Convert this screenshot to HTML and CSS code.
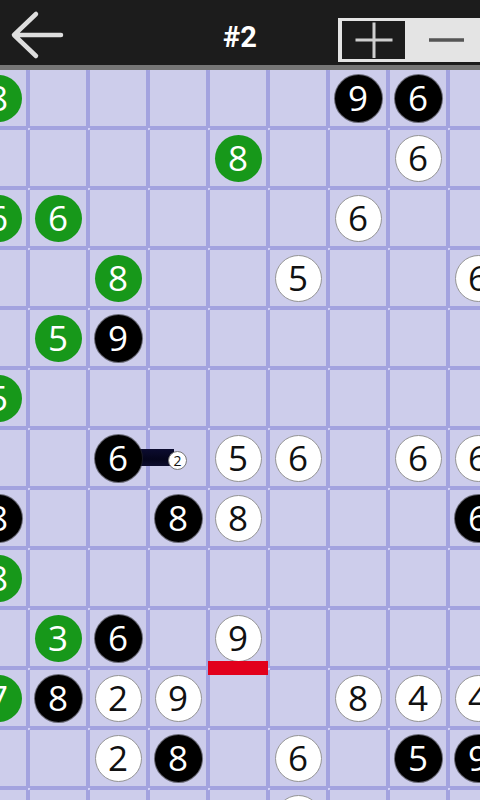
FILE: index.html
```html
<!DOCTYPE html>
<html>
<head>
<meta charset="utf-8">
<link rel="stylesheet" href="styles.css">
</head>
<body>
<div class="app">
  <header class="bar">
    <svg class="back" width="70" height="65" viewBox="0 0 70 65"><path d="M61 35 H15 M36 14 L14 35 L36 56" fill="none" stroke="#dedede" stroke-width="4.5" stroke-linecap="round" stroke-linejoin="round"/></svg>
    <div class="title">#2</div>
    <div class="zoom">
      <div class="zbtn on"><svg width="40" height="38" viewBox="0 0 40 38"><path d="M1.5 19 H38.5 M20 1.5 V37" fill="none" stroke="#cfcfcf" stroke-width="3"/></svg></div>
      <div class="zbtn off"><svg width="40" height="38" viewBox="0 0 40 38"><path d="M3 19 H38" fill="none" stroke="#555" stroke-width="3.5"/></svg></div>
    </div>
  </header>
  <main class="board">
    <div class="grid">
      <!-- row 0 -->
      <div class="cell"><span class="st g">8</span></div><div class="cell"></div><div class="cell"></div><div class="cell"></div><div class="cell"></div><div class="cell"></div><div class="cell"><span class="st b">9</span></div><div class="cell"><span class="st b">6</span></div><div class="cell"></div>
      <!-- row 1 -->
      <div class="cell"></div><div class="cell"></div><div class="cell"></div><div class="cell"></div><div class="cell"><span class="st g">8</span></div><div class="cell"></div><div class="cell"></div><div class="cell"><span class="st w">6</span></div><div class="cell"></div>
      <!-- row 2 -->
      <div class="cell"><span class="st g">6</span></div><div class="cell"><span class="st g">6</span></div><div class="cell"></div><div class="cell"></div><div class="cell"></div><div class="cell"></div><div class="cell"><span class="st w">6</span></div><div class="cell"></div><div class="cell"></div>
      <!-- row 3 -->
      <div class="cell"></div><div class="cell"></div><div class="cell"><span class="st g">8</span></div><div class="cell"></div><div class="cell"></div><div class="cell"><span class="st w">5</span></div><div class="cell"></div><div class="cell"></div><div class="cell"><span class="st w">6</span></div>
      <!-- row 4 -->
      <div class="cell"></div><div class="cell"><span class="st g">5</span></div><div class="cell"><span class="st b">9</span></div><div class="cell"></div><div class="cell"></div><div class="cell"></div><div class="cell"></div><div class="cell"></div><div class="cell"></div>
      <!-- row 5 -->
      <div class="cell"><span class="st g">5</span></div><div class="cell"></div><div class="cell"></div><div class="cell"></div><div class="cell"></div><div class="cell"></div><div class="cell"></div><div class="cell"></div><div class="cell"></div>
      <!-- row 6 -->
      <div class="cell"></div><div class="cell"></div><div class="cell"><span class="link"></span><span class="st b">6</span><span class="mini">2</span></div><div class="cell"></div><div class="cell"><span class="st w">5</span></div><div class="cell"><span class="st w">6</span></div><div class="cell"></div><div class="cell"><span class="st w">6</span></div><div class="cell"><span class="st w">6</span></div>
      <!-- row 7 -->
      <div class="cell"><span class="st b">8</span></div><div class="cell"></div><div class="cell"></div><div class="cell"><span class="st b">8</span></div><div class="cell"><span class="st w">8</span></div><div class="cell"></div><div class="cell"></div><div class="cell"></div><div class="cell"><span class="st b">6</span></div>
      <!-- row 8 -->
      <div class="cell"><span class="st g">8</span></div><div class="cell"></div><div class="cell"></div><div class="cell"></div><div class="cell"></div><div class="cell"></div><div class="cell"></div><div class="cell"></div><div class="cell"></div>
      <!-- row 9 -->
      <div class="cell"></div><div class="cell"><span class="st g">3</span></div><div class="cell"><span class="st b">6</span></div><div class="cell"></div><div class="cell"><span class="st w">9</span><span class="mark"></span></div><div class="cell"></div><div class="cell"></div><div class="cell"></div><div class="cell"></div>
      <!-- row 10 -->
      <div class="cell"><span class="st g">7</span></div><div class="cell"><span class="st b">8</span></div><div class="cell"><span class="st w">2</span></div><div class="cell"><span class="st w">9</span></div><div class="cell"></div><div class="cell"></div><div class="cell"><span class="st w">8</span></div><div class="cell"><span class="st w">4</span></div><div class="cell"><span class="st w">4</span></div>
      <!-- row 11 -->
      <div class="cell"></div><div class="cell"></div><div class="cell"><span class="st w">2</span></div><div class="cell"><span class="st b">8</span></div><div class="cell"></div><div class="cell"><span class="st w">6</span></div><div class="cell"></div><div class="cell"><span class="st b">5</span></div><div class="cell"><span class="st b">9</span></div>
      <!-- row 12 -->
      <div class="cell"></div><div class="cell"></div><div class="cell"></div><div class="cell"></div><div class="cell"></div><div class="cell"><span class="st w">5</span></div><div class="cell"></div><div class="cell"></div><div class="cell"></div>
    </div>
  </main>
</div>
</body>
</html>
```
FILE: styles.css
```css
html, body {
  margin: 0;
  padding: 0;
  background: #cdcdeb;
}
.app {
  width: 480px;
  height: 800px;
  overflow: hidden;
  display: flex;
  flex-direction: column;
}
.bar {
  flex: none;
  height: 65px;
  background: #1c1c1c;
  border-bottom: 5px solid #767676;
  display: grid;
  grid-template-columns: 1fr auto 1fr;
  align-items: center;
  overflow: hidden;
}
.back {
  display: block;
  align-self: start;
}
.title {
  font-family: Roboto, "Liberation Sans", sans-serif;
  font-weight: 700;
  font-size: 29px;
  color: #ffffff;
  margin-top: 9px;
}
.zoom {
  justify-self: end;
  align-self: start;
  margin-top: 18px;
  margin-right: -6px;
  height: 44px;
  box-sizing: border-box;
  padding: 3px 0 3px 4px;
  background: #e4e4e4;
  display: flex;
}
.zbtn {
  display: flex;
  align-items: center;
  justify-content: center;
}
.zbtn.on {
  width: 63px;
  background: #1c1c1c;
}
.zbtn.off {
  width: 81px;
}
.zbtn svg {
  display: block;
}
.board {
  flex: 1;
  overflow: hidden;
  background: #cdcdeb;
}
.grid {
  margin: -2px 0 0 -32px;
  display: grid;
  grid-template-columns: repeat(9, 60px);
  grid-auto-rows: 60px;
  background-color: #cdcdeb;
  background-image:
    radial-gradient(circle at 0 0, #d6d6fa 0 2px, transparent 2.6px),
    linear-gradient(to right, #a3a3df 0 2px, transparent 2px 58px, #a3a3df 58px),
    linear-gradient(to bottom, #a3a3df 0 2px, transparent 2px 58px, #a3a3df 58px);
  background-size: 60px 60px;
}
.cell {
  position: relative;
  display: flex;
  align-items: center;
  justify-content: center;
}
.st {
  position: relative;
  z-index: 1;
  width: 47px;
  height: 47px;
  border-radius: 50%;
  box-sizing: border-box;
  padding-bottom: 2px;
  display: flex;
  align-items: center;
  justify-content: center;
  font-family: "Open Sans", "DejaVu Sans", sans-serif;
  font-size: 35px;
  line-height: 45px;
}
.st.g {
  background: #17981a;
  color: #ffffff;
}
.st.b {
  background: #000000;
  color: #ffffff;
  box-shadow: 0 0 0 1px rgba(40, 40, 40, 0.6);
}
.st.w {
  background: #ffffff;
  color: #111111;
  border: 1.5px solid #949494;
}
.link {
  position: absolute;
  left: 50px;
  top: 21px;
  width: 36px;
  height: 17px;
  background: linear-gradient(to bottom, #0c0c30, #05051c 60%, #0e0e2e);
  z-index: 0;
}
.mini {
  position: absolute;
  z-index: 2;
  left: 80px;
  top: 23px;
  width: 19px;
  height: 19px;
  border-radius: 50%;
  background: #ffffff;
  border: 1px solid #777;
  box-sizing: border-box;
  display: flex;
  align-items: center;
  justify-content: center;
  font-family: "Open Sans", "DejaVu Sans", sans-serif;
  font-size: 14px;
  line-height: 17px;
  color: #111;
}
.mark {
  position: absolute;
  z-index: 2;
  left: 0;
  top: 53px;
  width: 60px;
  height: 14px;
  background: #e2001c;
}
```
